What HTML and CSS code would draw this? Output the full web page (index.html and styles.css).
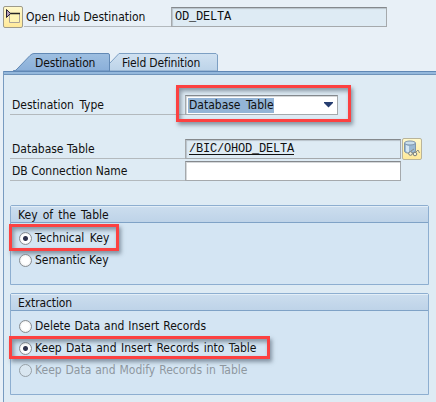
FILE: index.html
```html
<!DOCTYPE html>
<html lang="en">
<head>
<meta charset="utf-8">
<title>Open Hub Destination</title>
<link rel="stylesheet" href="styles.css">
</head>
<body>
<header class="top">
  <button class="icon-button" aria-label="Other object">
    <svg width="20" height="22" viewBox="0 0 20 22"><path d="M6.500 7.500h10v9h-10z" fill="#fff5b5" stroke="#aaa397"/><path d="M6 7.500h11" stroke="#252525" stroke-width="1.500"/><path d="M3.500 3.500v8l4-4z" fill="#b49dbb" stroke="#252033"/></svg>
  </button>
  <span class="label top-label"><span class="t-hub">Open Hub Destination</span></span>
  <span class="field readonly mono">OD_DELTA</span>
</header>
<nav class="tabs">
  <svg class="tab-shapes" width="210" height="18" viewBox="0 0 210 18">
    <defs>
      <linearGradient id="on" x2="0" y2="1"><stop stop-color="#9ebfe1"/><stop offset="1" stop-color="#8aafd9"/></linearGradient>
      <linearGradient id="off" x2="0" y2="1"><stop stop-color="#d0e1f1"/><stop offset="1" stop-color="#bcd3e8"/></linearGradient>
    </defs>
    <path d="M99.500 18V10.500L109 .5H206l1.500 1.500V18z" fill="url(#off)" stroke="#7c9fc3"/>
    <path d="M3 18Q6 18 8 15L20 2.500Q22 .5 24 .5H98Q99.500 .5 99.500 2V18z" fill="url(#on)" stroke="#6289b5"/>
  </svg>
  <span class="tab tab-active"><span class="t-tab1">Destination</span></span>
  <span class="tab"><span class="t-tab2">Field Definition</span></span>
</nav>
<main class="panel">
  <div class="row row-type">
    <span class="label"><span class="t-type">Destination Type</span></span>
    <span class="field select"><span class="selected t-value">Database Table</span><svg class="arrow" width="9" height="6"><path d="M0 0h9v1L4.500 5.500 0 1z" fill="#263d70"/></svg></span>
    <i class="mark mark-type"></i>
  </div>
  <div class="row row-table">
    <span class="label"><span class="t-table">Database Table</span></span>
    <span class="field readonly mono"><span class="link">/BIC/OHOD_DELTA</span></span>
    <button class="icon-button icon-display" aria-label="Display table">
      <svg width="20" height="22" viewBox="0 0 20 22"><path d="M2.500 5v8c0 3 11 3 11 0V5" fill="#9ab9d3" stroke="#7f95aa"/><path d="M4 7v6q1 1.500 3 1.500V8z" fill="#d6e7f3"/><ellipse cx="8" cy="5" rx="5.500" ry="2" fill="#c8deed" stroke="#7f95aa"/><circle cx="8.500" cy="15.500" r="1.800" fill="#f6f3d5" stroke="#777c7c"/><circle cx="13" cy="16" r="1.800" fill="#f6f3d5" stroke="#777c7c"/><path d="M9 13l3-2M14 14l2-2 1.500 3" fill="none" stroke="#8a8c84"/></svg>
    </button>
  </div>
  <div class="row row-conn">
    <span class="label"><span class="t-conn">DB Connection Name</span></span>
    <span class="field"></span>
  </div>
  <section class="group group-key">
    <h2><span class="t-key">Key of the Table</span></h2>
    <div class="option"><i class="radio on"></i><span class="t-tech">Technical Key</span><i class="mark mark-tech"></i></div>
    <div class="option"><i class="radio"></i><span class="t-sem">Semantic Key</span></div>
  </section>
  <section class="group group-extract">
    <h2><span class="t-ext">Extraction</span></h2>
    <div class="option"><i class="radio"></i><span class="t-del">Delete Data and Insert Records</span></div>
    <div class="option"><i class="radio on"></i><span class="t-keep">Keep Data and Insert Records into Table</span><i class="mark mark-keep"></i></div>
    <div class="option disabled"><i class="radio"></i><span class="t-mod">Keep Data and Modify Records in Table</span></div>
  </section>
</main>
</body>
</html>
```
FILE: styles.css
```css
* { box-sizing: border-box; }
body {
  margin: 0;
  width: 436px;
  height: 402px;
  overflow: hidden;
  background: #e8f0f7;
  color: #101010;
  font: 12px/18px "DejaVu Sans Condensed", "DejaVu Sans", sans-serif;
  font-stretch: condensed;
  white-space: nowrap;
}
svg { display: block; }
.top { display: flex; height: 53px; padding: 6px 0 0 3px; }
.icon-button {
  width: 20px;
  height: 22px;
  padding: 0;
  border: 1px solid #9e9b8b;
  border-radius: 2px;
  background: linear-gradient(#fff9cb, #ffe99a);
}
.icon-button svg { margin: -1px; }
.icon-display { border-color: #b9b49b; }
.label {
  width: 175px;
  height: 20px;
  padding-left: 2px;
  line-height: 21px;
  border-bottom: 1px solid #b3b9bd;
}
.top-label { width: 147px; margin: 1px 0 0 1px; }
.field {
  width: 216px;
  height: 20px;
  padding-left: 3px;
  line-height: 17px;
  border: 1px solid #a5a9ac;
  border-top-color: #85898d;
  background: #fff;
  box-shadow: inset 1px 1px 0 #d5d8da;
}
.readonly { background: #deebf4; box-shadow: inset 1px 1px 1px #b9c2ca; }
.top .field { margin-top: 1px; }
.mono { font-family: "Liberation Mono", monospace; font-size: 12px; line-height: 19px; letter-spacing: -.2px; }
.tabs { display: flex; position: relative; height: 18px; padding-left: 35px; }
.tab-shapes { position: absolute; left: 10px; top: 0; }
.tab { position: relative; height: 18px; line-height: 20px; }
.tab-active { width: 87px; }
.panel {
  height: 331px;
  margin-left: 3px;
  padding: 20px 0 0 6px;
  border-left: 1px solid #789bc0;
  background: linear-gradient(#6088b5 0 1px, #94b8dc 1px 3px, #7094ba 3px 4px, #deebf4 4px);
}
.row { display: flex; position: relative; }
.row-type { margin-top: 4px; height: 44px; }
.row-table { height: 22px; }
.select { display: flex; position: relative; width: 153px; align-items: center; justify-content: space-between; padding-right: 4px; }
.selected { width: 86px; height: 15px; margin-left: -1px; padding-left: 1px; line-height: 15px; background: #93b4d6; }
.arrow { width: 9px; }
.link { display: block; width: 105px; height: 15px; line-height: 19px; border-bottom: 1px solid #111; }
.icon-display { margin: -1px 0 0 1px; }
.mark {
  position: absolute;
  border: 3px solid #fc4141;
  box-shadow: 2px 3px 4px #5c6b7aaa, inset 2px 3px 4px #5c6b7aaa;
}
.mark-type { left: 166px; top: -10px; width: 175px; height: 37px; }
.group { width: 419px; border: 1px solid #8daed0; border-radius: 2px 2px 0 0; background: #d4e5f3; }
.group-key { height: 80px; margin-top: 24px; }
.group-extract { height: 102px; margin-top: 8px; }
h2 {
  height: 17px;
  margin: 0 0 4px;
  padding-left: 7px;
  font: inherit;
  line-height: 16px;
  border-top: 1px solid #e3eef7;
  border-bottom: 1px solid #7fa2c6;
  background: linear-gradient(#cbddee, #bed3e8);
}
.option { display: flex; position: relative; height: 22px; padding-left: 8px; align-items: center; gap: 3px; }
.radio { width: 13px; height: 13px; border: 1px solid #888d92; border-radius: 50%; background: radial-gradient(#fff 45%, #dedfe0); }
.on { background: radial-gradient(circle, #30344e 0 2px, #fff 3px 4px, #dedfe0); }
.disabled { color: #8e979f; }
.disabled .radio { background: #d9e6f0; border-color: #969fa6; }
.mark-tech { left: -2px; top: -3px; width: 110px; height: 27px; }
.mark-keep { left: -2px; top: -1px; width: 261px; height: 23px; }
.t-tab1, .t-tab2 { letter-spacing: -.15px; }
.t-type, .t-value, .t-tech { word-spacing: 2px; }
.t-key { word-spacing: 1.7px; }
.t-ext { letter-spacing: -.1px; }
.t-del { word-spacing: .5px; }
.t-keep { word-spacing: 1px; }
.t-mod { word-spacing: .5px; }
```
